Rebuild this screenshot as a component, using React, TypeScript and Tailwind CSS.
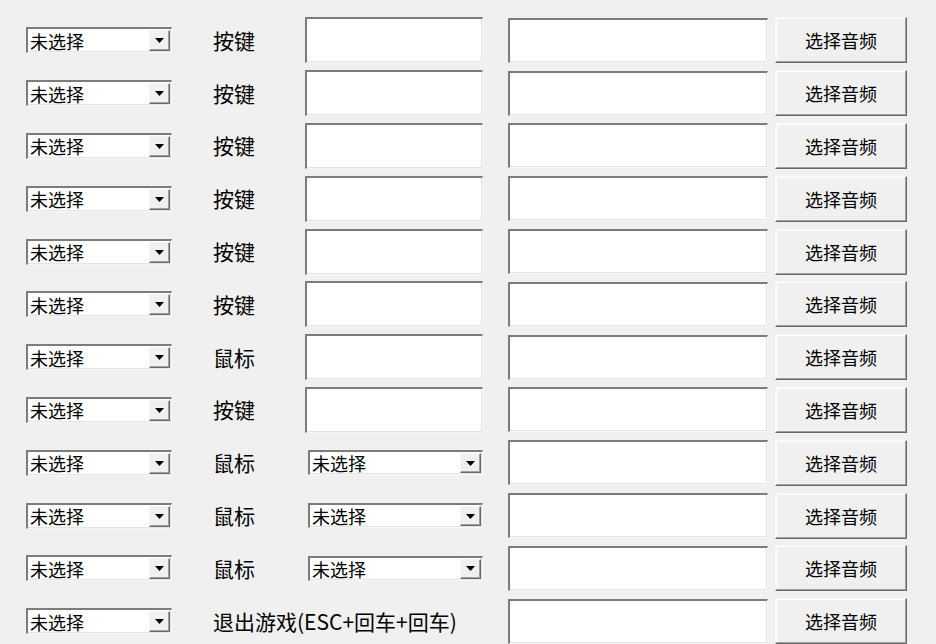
import React from 'react';

type RowKind = 'key' | 'mouseEdit' | 'mouseCombo' | 'exit';

const rows: { label: string; kind: RowKind }[] = [
  { label: '按键', kind: 'key' },
  { label: '按键', kind: 'key' },
  { label: '按键', kind: 'key' },
  { label: '按键', kind: 'key' },
  { label: '按键', kind: 'key' },
  { label: '按键', kind: 'key' },
  { label: '鼠标', kind: 'mouseEdit' },
  { label: '按键', kind: 'key' },
  { label: '鼠标', kind: 'mouseCombo' },
  { label: '鼠标', kind: 'mouseCombo' },
  { label: '鼠标', kind: 'mouseCombo' },
  { label: '退出游戏(ESC+回车+回车)', kind: 'exit' },
];

// sunken win32 style frame (scaled up, so the dark edge reads ~2px)
const sunken =
  'border-t-2 border-l-2 border-b border-r border-t-[#7c7c7c] border-l-[#7c7c7c] border-b-[#f7f7f7] border-r-[#f7f7f7] shadow-[inset_-1px_-1px_0_#e3e3e3]';

function ComboBox({ className }: { className: string }) {
  return (
    <div className={`flex bg-white ${sunken} ${className}`}>
      <span className="flex flex-1 items-center pl-[2px] text-[18px] leading-none text-black">
        未选择
      </span>
      <span className="my-[1px] mr-[1px] flex w-[21px] items-center justify-center border border-t-[#f4f4f4] border-l-[#f4f4f4] border-b-[#6a6a6a] border-r-[#6a6a6a] bg-[#f0f0f0] shadow-[inset_-1px_-1px_0_#a0a0a0]">
        <svg width="9" height="5" viewBox="0 0 9 5">
          <path d="M0 0h9L4.5 5z" fill="#000" />
        </svg>
      </span>
    </div>
  );
}

function EditBox({ className }: { className: string }) {
  return <div className={`bg-white ${sunken} ${className}`} />;
}

export default function App() {
  return (
    <div
      className="h-[644px] w-[936px] overflow-hidden bg-[#f0f0f0] pt-[14px] text-black"
      style={{ fontFamily: '"Noto Sans CJK SC", "Noto Sans", sans-serif' }}
    >
      {rows.map((row, i) => (
        <div key={i} className="flex h-[52.8px] items-center pl-[26px]">
          <ComboBox className="h-[26px] w-[146px]" />

          {row.kind === 'exit' ? (
            <div className="ml-[41px] w-[270px] whitespace-nowrap text-[21px] leading-none">
              {row.label}
            </div>
          ) : (
            <>
              <div className="ml-[41px] w-[92px] text-[21px] leading-none">{row.label}</div>
              <div className="flex w-[178px] items-center">
                {row.kind === 'mouseCombo' ? (
                  <ComboBox className="ml-[3px] h-[25px] w-[175px]" />
                ) : (
                  <EditBox className="h-[46px] w-[178px]" />
                )}
              </div>
            </>
          )}

          <EditBox className="ml-[25px] h-[45px] w-[260px]" />

          <button className="ml-[7px] h-[46px] w-[132px] border border-t-[#f8f8f8] border-l-[#f8f8f8] border-b-[#696969] border-r-[#696969] bg-[#f0f0f0] text-[18px] leading-none text-black shadow-[inset_-1px_-1px_0_#a0a0a0,inset_1px_1px_0_#ffffff]">
            选择音频
          </button>
        </div>
      ))}
    </div>
  );
}
